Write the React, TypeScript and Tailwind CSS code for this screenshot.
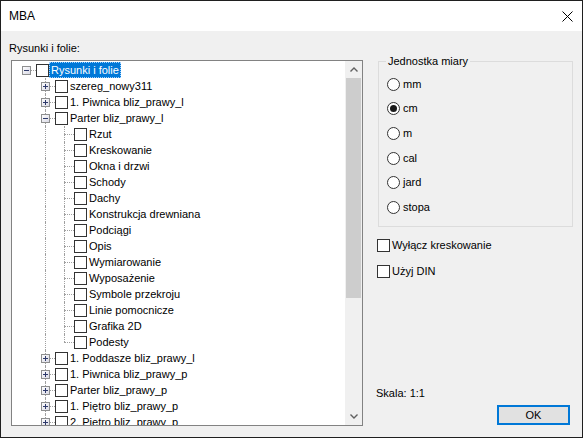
import React from 'react'

// Tree rows of the "Rysunki i folie" list, flattened in display order.
// `cont` says, per ancestor column, whether a sibling line keeps going down.
type Row = {
  label: string
  level: number
  kids?: 'open' | 'closed'
  last?: boolean
  cont: boolean[]
  selected?: boolean
}

const L1 = [false]
const L2 = [false, true]

const CHILDREN = [
  'Rzut',
  'Kreskowanie',
  'Okna i drzwi',
  'Schody',
  'Dachy',
  'Konstrukcja drewniana',
  'Podciągi',
  'Opis',
  'Wymiarowanie',
  'Wyposażenie',
  'Symbole przekroju',
  'Linie pomocnicze',
  'Grafika 2D',
  'Podesty',
]

const ROWS: Row[] = [
  { label: 'Rysunki i folie', level: 0, kids: 'open', cont: [], selected: true, last: true },
  { label: 'szereg_nowy311', level: 1, kids: 'closed', cont: L1 },
  { label: '1. Piwnica bliz_prawy_l', level: 1, kids: 'closed', cont: L1 },
  { label: 'Parter bliz_prawy_l', level: 1, kids: 'open', cont: L1 },
  ...CHILDREN.map((label, i) => ({
    label,
    level: 2,
    cont: L2,
    last: i === CHILDREN.length - 1,
  })),
  { label: '1. Poddasze bliz_prawy_l', level: 1, kids: 'closed', cont: L1 },
  { label: '1. Piwnica bliz_prawy_p', level: 1, kids: 'closed', cont: L1 },
  { label: 'Parter bliz_prawy_p', level: 1, kids: 'closed', cont: L1 },
  { label: '1. Piętro bliz_prawy_p', level: 1, kids: 'closed', cont: L1 },
  { label: '2. Piętro bliz_prawy_p', level: 1, kids: 'closed', cont: L1 },
]

const UNITS = ['mm', 'cm', 'm', 'cal', 'jard', 'stopa']

function Expander({ open }: { open: boolean }) {
  return (
    <svg width="9" height="9" viewBox="0 0 9 9" className="absolute left-[5px] top-[4px]">
      <defs>
        <linearGradient id="exg" x1="0" y1="0" x2="1" y2="1">
          <stop offset="0" stopColor="#ffffff" />
          <stop offset="1" stopColor="#d8d8e4" />
        </linearGradient>
      </defs>
      <rect x="0.5" y="0.5" width="8" height="8" fill="url(#exg)" stroke="#8e8f8f" />
      <path d="M2 4.5h5" stroke="#2e3a6b" />
      {!open && <path d="M4.5 2v5" stroke="#2e3a6b" />}
    </svg>
  )
}

function TreeRow({ row }: { row: Row }) {
  return (
    <div className="flex h-[16px] items-center">
      {row.cont.map((c, i) => (
        <div key={i} className="relative h-[16px] w-[19px] shrink-0">
          {c && <div className="absolute left-[9px] top-0 h-[16px] border-l border-dotted border-[#a0a0a0]" />}
        </div>
      ))}
      <div className="relative h-[16px] w-[19px] shrink-0">
        {row.level > 0 && (
          <div
            className={
              row.last
                ? 'absolute left-[9px] top-0 h-[8px] border-l border-dotted border-[#a0a0a0]'
                : 'absolute left-[9px] top-0 h-[16px] border-l border-dotted border-[#a0a0a0]'
            }
          />
        )}
        <div className="absolute left-[9px] right-0 top-[8px] border-t border-dotted border-[#a0a0a0]" />
        {row.kids && <Expander open={row.kids === 'open'} />}
      </div>
      <div className="h-[13px] w-[13px] shrink-0 border border-[#333333] bg-white" />
      <div
        className={
          row.selected
            ? 'flex h-[16px] items-center whitespace-nowrap border border-dotted border-[#9fd0ff] bg-[#0078d7] px-[1px] text-white'
            : 'flex h-[16px] items-center whitespace-nowrap px-[2px] text-black'
        }
      >
        {row.label}
      </div>
    </div>
  )
}

function Chevron({ up }: { up: boolean }) {
  return (
    <svg width="8" height="5" viewBox="0 0 8 5">
      <path
        d={up ? 'M0.5 4.5L4 1L7.5 4.5' : 'M0.5 0.5L4 4L7.5 0.5'}
        fill="none"
        stroke="#606060"
        strokeWidth="1.4"
      />
    </svg>
  )
}

function Scrollbar() {
  return (
    <div className="flex w-[17px] shrink-0 flex-col bg-[#f0f0f0]">
      <div className="flex h-[17px] items-center justify-center">
        <Chevron up />
      </div>
      <div className="mx-[1px] h-[220px] bg-[#cdcdcd]" />
      <div className="flex-1" />
      <div className="flex h-[17px] items-center justify-center">
        <Chevron up={false} />
      </div>
    </div>
  )
}

export default function App() {
  return (
    <div className="flex h-[438px] w-[583px] flex-col border border-[#1f1f1f] bg-[#f0f0f0] font-['Liberation_Sans',Arial,sans-serif] text-[11px] leading-[13px] text-black">
      {/* title bar */}
      <div className="flex h-[30px] shrink-0 items-center justify-between bg-white pl-[8px] pr-[9px]">
        <span className="text-[12px]">MBA</span>
        <svg width="11" height="11" viewBox="0 0 11 11">
          <path d="M0.5 0.5L10.5 10.5M10.5 0.5L0.5 10.5" stroke="#000" strokeWidth="1" />
        </svg>
      </div>

      <div className="flex flex-1">
        {/* left: tree */}
        <div className="flex flex-col pl-[8px] pt-[11px]">
          <div>Rysunki i folie:</div>
          <div className="ml-[2px] mt-[5px] flex h-[366px] w-[352px] border border-[#828282] bg-white">
            <div className="flex-1 overflow-hidden pl-[5px] pt-[1px]">
              {ROWS.map((r, i) => (
                <TreeRow key={i} row={r} />
              ))}
            </div>
            <Scrollbar />
          </div>
        </div>

        {/* right: options */}
        <div className="ml-[13px] flex w-[197px] flex-col pb-[12px] pt-[30px]">
          <div className="relative ml-[2px] h-[166px] w-[195px] border border-[#dcdcdc] pl-[8px] pt-[10px]">
            <div className="absolute -top-[7px] left-[7px] bg-[#f0f0f0] px-[2px]">Jednostka miary</div>
            {UNITS.map((u) => (
              <div key={u} className="flex h-[24.6px] items-center">
                <div className="flex h-[13px] w-[13px] items-center justify-center rounded-full border border-[#333333] bg-white">
                  {u === 'cm' && <div className="h-[7px] w-[7px] rounded-full bg-[#1a1a1a]" />}
                </div>
                <span className="ml-[3px]">{u}</span>
              </div>
            ))}
          </div>

          <div className="ml-[1px] mt-[10px] flex h-[16px] items-center">
            <div className="h-[13px] w-[13px] border border-[#333333] bg-white" />
            <span className="ml-[2px]">Wyłącz kreskowanie</span>
          </div>
          <div className="ml-[1px] mt-[10px] flex h-[16px] items-center">
            <div className="h-[13px] w-[13px] border border-[#333333] bg-white" />
            <span className="ml-[2px]">Użyj DIN</span>
          </div>

          <div className="mt-auto">Skala: 1:1</div>
          <button className="mr-[3px] mt-[5px] flex h-[20px] w-[73px] items-center justify-center self-end border-2 border-[#0078d7] bg-[#e1e1e1]">
            OK
          </button>
        </div>
      </div>
    </div>
  )
}
